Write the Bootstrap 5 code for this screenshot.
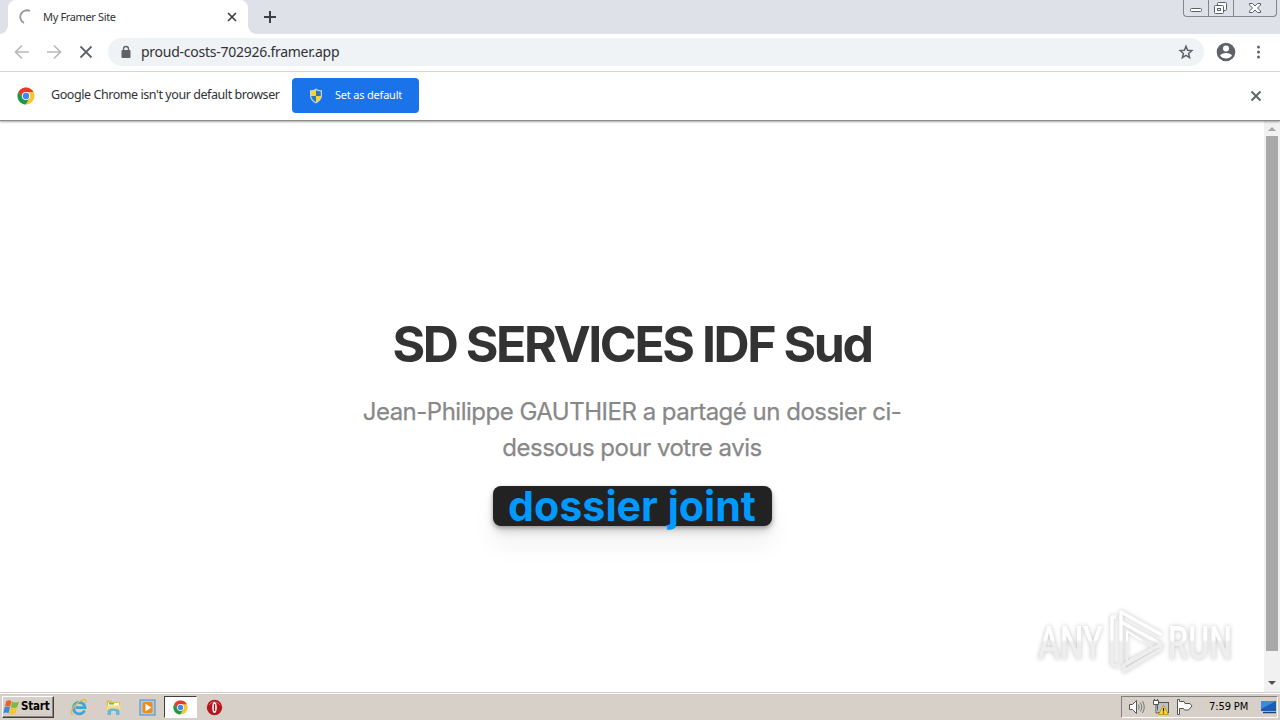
<!DOCTYPE html>
<html lang="fr">
<head>
    <meta charset="UTF-8">
    <meta name="viewport" content="width=device-width, initial-scale=1.0">
    <title>My Framer Site</title>
    <link href="https://cdn.jsdelivr.net/npm/bootstrap@5.3.0/dist/css/bootstrap.min.css" rel="stylesheet">
    <style>
        body {
            font-family: "Noto Sans", "Open Sans", sans-serif;
            font-size: 12px;
            color: #303236;
            line-height: 1;
        }
        svg {
            display: block;
            flex-shrink: 0;
        }
        .tab-strip {
            height: 34px;
            background: #dee1e8;
            padding-left: 8px;
        }
        .tab {
            position: relative;
            width: 240px;
            height: 34px;
            background: #fff;
            border-radius: 8px 8px 0 0;
            padding: 0 10px 0 11px;
        }
        .tab::before,
        .tab::after {
            content: "";
            position: absolute;
            bottom: 0;
            width: 8px;
            height: 8px;
        }
        .tab::before {
            left: -8px;
            background: radial-gradient(circle at 0 0, #dee1e8 7.5px, #fff 8px);
        }
        .tab::after {
            right: -8px;
            background: radial-gradient(circle at 100% 0, #dee1e8 7.5px, #fff 8px);
        }
        .tab-title {
            font-size: 11px;
            margin-left: 8px;
            padding-bottom: 2px;
            letter-spacing: -0.35px;
        }
        .new-tab {
            margin-left: 15px;
        }
        .window-buttons {
            width: 94px;
            height: 17px;
            margin-right: 3px;
            border: 1px solid #83868c;
            border-top: 0;
            border-radius: 0 0 4px 4px;
        }
        .toolbar {
            height: 38px;
            padding: 0 8px 1px 13px;
            border-bottom: 1px solid #dadce0;
        }
        .address {
            height: 28px;
            background: #f0f3f6;
            border-radius: 14px;
            margin-left: 13px;
            padding: 0 10px 0 12px;
            font-size: 14px;
        }
        .address-text {
            margin-left: 9px;
            letter-spacing: -0.26px;
        }
        .infobar {
            height: 49px;
            padding: 0 18px 1px 17px;
            border-bottom: 1px solid #8b8b8b;
            box-shadow: 0 1px 2px rgba(0, 0, 0, .35);
            position: relative;
        }
        .infobar-text {
            width: 241px;
            margin-left: 16px;
            font-size: 12.5px;
            letter-spacing: -0.43px;
            white-space: nowrap;
        }
        .btn-default-browser {
            width: 127px;
            height: 35px;
            background: #1a73e8;
            border-radius: 4px;
            color: #fff;
            font-size: 11px;
            padding: 0 0 0 17px;
            letter-spacing: -0.2px;
        }
        .btn-default-browser span {
            margin-left: 12px;
        }
        .viewport {
            height: 571px;
        }
        .page {
            font-family: Inter, sans-serif;
            position: relative;
            padding-top: 193px;
        }
        .page-title {
            font-size: 50px;
            line-height: 60px;
            font-weight: 700;
            letter-spacing: -2.45px;
            color: #333;
            margin: 0;
        }
        .page-text {
            width: 560px;
            font-size: 24px;
            line-height: 36px;
            letter-spacing: -0.5px;
            color: #888;
            -webkit-text-stroke: .25px #888;
            margin: 20px 0;
        }
        .btn-file {
            width: 279px;
            height: 40px;
            background: #222;
            border-radius: 8px;
            color: #0099ff;
            font-size: 41.2px;
            line-height: 40px;
            font-weight: 700;
            padding: 0;
            box-shadow: 0 2px 4px rgba(0, 0, 0, .3), 0 5px 10px rgba(0, 0, 0, .14), 0 20px 24px rgba(0, 0, 0, .05);
        }
        .btn-file:hover {
            background: #222;
            color: #0099ff;
        }
        .watermark {
            position: absolute;
            left: 1030px;
            top: 484px;
            filter: drop-shadow(0 0 2px rgba(0, 0, 0, .24));
        }
        .scroll-track {
            width: 16px;
            background: #f1f1f1;
        }
        .scroll-thumb {
            width: 12px;
            height: 515px;
            background: #a8a8a8;
        }
        .taskbar {
            height: 28px;
            background: #d6d0c8;
            border-top: 1px solid #d6d0c8;
            box-shadow: inset 0 1px 0 #fff;
            padding: 3px 2px 1px;
            font-family: "DejaVu Sans Condensed", "DejaVu Sans", sans-serif;
            color: #000;
        }
        .start {
            width: 52px;
            height: 22px;
            border: 1px solid;
            border-color: #fff #404040 #404040 #fff;
            box-shadow: inset -1px -1px 0 #8a8680;
            font-size: 11.5px;
            font-weight: 700;
            padding-left: 0;
            letter-spacing: -0.2px;
        }
        .start svg {
            margin-right: 1px;
        }
        .task-items {
            margin-left: 8px;
        }
        .task-item {
            width: 34px;
            height: 22px;
        }
        .task-item.active {
            width: 33px;
            background: #fff;
            border: 1px solid;
            border-color: #404040 #fff #fff #404040;
        }
        .tray {
            width: 157px;
            height: 22px;
            border: 1px solid;
            border-color: #808080 #fff #fff #808080;
            padding-left: 5px;
            font-size: 11px;
        }
        .clock {
            margin-left: 16px;
            letter-spacing: -0.1px;
            padding-bottom: 1px;
            white-space: nowrap;
        }
    </style>
</head>
<body class="vh-100 overflow-hidden bg-white">
    <!-- shared Chrome logo -->
    <svg width="0" height="0" class="position-absolute">
        <symbol id="chrome" viewBox="0 0 18 18">
            <circle cx="9" cy="9" r="8.5" fill="#fbc52d"/>
            <path d="M9 5h7.5L15.6 3.7A8.5 8.5 0 0 0 1.6 4.8L5.6 11z" fill="#e33b2e"/>
            <path d="M1.6 4.8A8.5 8.5 0 0 0 8.7 17.5L12.4 11 5.6 11z" fill="#1a9a50"/>
            <circle cx="9" cy="9" r="4.1" fill="#fff"/>
            <circle cx="9" cy="9" r="3.2" fill="#4285f4"/>
        </symbol>
    </svg>

    <div class="tab-strip d-flex">
        <div class="tab d-flex align-items-center">
            <svg width="16" height="16" viewBox="0 0 16 16" fill="none" stroke="#999" stroke-width="1.8"><path d="M11 2A6.500 6.500 0 0 0 5 14"/></svg>
            <span class="tab-title">My Framer Site</span>
            <svg class="ms-auto" width="12" height="12" viewBox="0 0 12 12" stroke="#3c4043" stroke-width="1.7"><path d="m2 2 8 8M10 2l-8 8"/></svg>
        </div>
        <svg class="new-tab align-self-center" width="14" height="14" viewBox="0 0 14 14" stroke="#3c4043" stroke-width="2"><path d="M7 1v12M1 7h12"/></svg>
        <div class="window-buttons ms-auto">
            <svg width="92" height="16" viewBox="0 0 92 16" fill="none" stroke="#5c5f66">
                <path d="M24.5 0v16M49.5 0v16" stroke="#83868c"/>
                <rect x="6.5" y="8.5" width="11" height="3" rx="1" fill="#fff"/>
                <rect x="33.5" y="2.5" width="9" height="8" rx="1" fill="#fff"/>
                <rect x="30.5" y="5.5" width="9" height="8" rx="1" fill="#fff"/>
                <rect x="33.5" y="8.5" width="3" height="2"/>
                <path d="M65.5 3.5h3l2.5 2.500 2.500-2.500h3v1.500L73.500 8l3 3v1.500h-3L71 10l-2.500 2.500h-3V11l3-3-3-3z" fill="#fff"/>
            </svg>
        </div>
    </div>

    <div class="toolbar d-flex align-items-center">
        <svg width="82" height="18" viewBox="0 0 82 18" fill="none" stroke-width="1.7">
            <path d="M16 9H3M9 2.5 2.500 9 9 15.500M34 9h13M41 2.500 47.500 9 41 15.500" stroke="#b7b9bc"/>
            <path d="m67.500 3.500 11 11M78.500 3.500l-11 11" stroke="#5f6368" stroke-width="1.8"/>
        </svg>
        <div class="address d-flex align-items-center flex-grow-1">
            <svg width="12" height="14" viewBox="0 0 12 14"><rect x="1.5" y="5" width="9" height="8" rx="1" fill="#5f6368"/><path d="M3.5 6V4a2.500 2.500 0 0 1 5 0v2" fill="none" stroke="#5f6368" stroke-width="1.3"/></svg>
            <span class="address-text">proud-costs-702926.framer.app</span>
            <svg class="ms-auto" width="16" height="16" viewBox="0 0 16 16" fill="none" stroke="#5f6368" stroke-width="1.5"><path d="m8 2.300 1.600 3.900 4.200.4-3.200 2.800 1 4.200L8 11.400l-3.600 2.200 1-4.200-3.200-2.800 4.200-.4z"/></svg>
        </div>
        <svg class="ms-2" width="60" height="20" viewBox="0 0 60 20">
            <circle cx="14" cy="10" r="9.3" fill="#5f6368"/>
            <circle cx="14" cy="6.5" r="3" fill="#fff"/>
            <path d="M8 13.500c1.500-3.500 10.500-3.500 12 0-2.500 4-9.500 4-12 0z" fill="#fff"/>
            <g fill="#5f6368"><circle cx="46.5" cy="5" r="1.5"/><circle cx="46.5" cy="10" r="1.5"/><circle cx="46.5" cy="15" r="1.5"/></g>
        </svg>
    </div>

    <div class="infobar d-flex align-items-center bg-white">
        <svg width="18" height="18"><use href="#chrome"/></svg>
        <span class="infobar-text">Google Chrome isn't your default browser</span>
        <button type="button" class="btn btn-default-browser border-0 d-flex align-items-center">
            <svg width="14" height="16" viewBox="0 0 14 16">
                <path d="M7 .5C5 2 3 2.300 1 2.300V7c0 4 2.500 6.500 6 8.500 3.500-2 6-4.500 6-8.500V2.300C11 2.300 9 2 7 .5z" fill="#c9d5dd"/>
                <path d="M7 2C5.500 3 4 3.300 2.200 3.400V8H7zM7 8h4.800c-.3 3-2.300 4.800-4.800 6.200z" fill="#f9d52c"/>
                <path d="M7 2c1.500 1 3 1.300 4.800 1.400V8H7zM7 8H2.200c.3 3 2.300 4.800 4.800 6.200z" fill="#2d78bd"/>
            </svg>
            <span>Set as default</span>
        </button>
        <svg class="ms-auto" width="12" height="12" viewBox="0 0 12 12" stroke="#5f6368" stroke-width="1.9"><path d="m1.500 1.500 9 9M10.500 1.500l-9 9"/></svg>
    </div>

    <div class="viewport d-flex">
        <main class="page flex-grow-1 d-flex flex-column align-items-center text-center">
            <h1 class="page-title">SD SERVICES IDF Sud</h1>
            <p class="page-text">Jean-Philippe GAUTHIER a partagé un dossier ci-dessous pour votre avis</p>
            <button type="button" class="btn btn-file border-0">dossier joint</button>
            <svg class="watermark" width="220" height="72" viewBox="0 0 220 72">
                <defs>
                    <linearGradient id="fade" gradientUnits="userSpaceOnUse" x1="0" y1="0" x2="0" y2="72">
                        <stop offset=".48" stop-color="#fff"/>
                        <stop offset=".52" stop-color="#eee"/>
                    </linearGradient>
                </defs>
                <g font-family="Roboto, sans-serif" font-size="46" font-weight="500" fill="url(#fade)">
                    <text x="8" y="54" textLength="65" lengthAdjust="spacingAndGlyphs">ANY</text>
                    <text x="138" y="54" textLength="64" lengthAdjust="spacingAndGlyphs">RUN</text>
                </g>
                <g fill="none" stroke="url(#fade)" stroke-width="3.5" stroke-linejoin="round">
                    <path d="M86 12h-4v47l6 3M91 58V7l41 23"/>
                    <path d="M91 17l40 22v5L94 66v-6l36-20"/>
                    <path d="M97 26v31l26-14z" stroke-width="2"/>
                </g>
            </svg>
        </main>
        <div class="scroll-track d-flex flex-column align-items-center">
            <svg width="16" height="15" viewBox="0 0 16 15"><path d="m4 10 4-4 4 4z" fill="#a3a3a3"/></svg>
            <div class="scroll-thumb"></div>
            <svg class="mt-auto" width="16" height="17" viewBox="0 0 16 17"><path d="m4 6 4 4 4-4z" fill="#505050"/></svg>
        </div>
    </div>

    <div class="taskbar d-flex">
        <div class="start d-flex align-items-center">
            <svg width="17" height="17" viewBox="0 0 16 16">
                <path d="M3 2C5 .7 6.500 1 8 2L6.800 7.300c-1.700-1-3.200-1-5 0z" fill="#e9622c"/>
                <path d="M8.500 2.500c2 1 4 .9 6.500 0l-1.600 5.200c-2 1-4 .9-6 0z" fill="#80b83c"/>
                <path d="M1.600 7.800c1.800-1 3.300-.9 5 0L5.300 13.400c-1.800-1-3.200-1-5 0z" fill="#3c8bd0"/>
                <path d="M7.200 8.200c1.900.9 3.900.9 6 0l-1.500 5.600c-2 .9-3.900.9-5.900 0z" fill="#f7c52e"/>
            </svg>
            <span>Start</span>
        </div>
        <div class="task-items d-flex">
            <div class="task-item d-flex align-items-center justify-content-center">
                <svg width="18" height="18" viewBox="0 0 18 18" fill="none">
                    <path d="M14.500 12.500A5.800 5.800 0 1 1 15 9.700H5.500" stroke="#3ba5e0" stroke-width="2.7"/>
                    <path d="M3 16.500C-1 16 2 9 8 4.500s9.500-3 7.500.5" stroke="#e4b83d" stroke-width="1.3"/>
                </svg>
            </div>
            <div class="task-item d-flex align-items-center justify-content-center">
                <svg width="17" height="17" viewBox="0 0 17 17">
                    <path d="M1.500 1.500h5l1 1.500H15v10H1.500z" fill="#dfbd59"/>
                    <path d="M3 4h11v4H3z" fill="#fffbe0"/>
                    <path d="M4 4h5v1.500H4z" fill="#6bb36b"/>
                    <path d="M1.500 6.500h14V13h-14z" fill="#f2dc87"/>
                    <path d="M2.500 16v-4c0-3.500 12-3.500 12 0v4H11v-3c0-1.200-5-1.200-5 0v3z" fill="#68b5dd"/>
                </svg>
            </div>
            <div class="task-item d-flex align-items-center justify-content-center">
                <svg width="17" height="17" viewBox="0 0 17 17"><rect x="1" y="1" width="15" height="15" fill="#a9cbe6" stroke="#528dbb"/><rect x="3.5" y="3" width="10" height="11" rx="2" fill="#f28a1e"/><path d="m6.500 4.800 6 3.700-6 3.700z" fill="#fff"/></svg>
            </div>
            <div class="task-item active d-flex align-items-center justify-content-center">
                <svg width="15" height="15"><use href="#chrome"/></svg>
            </div>
            <div class="task-item d-flex align-items-center justify-content-center">
                <svg width="17" height="17" viewBox="0 0 17 17"><circle cx="8.5" cy="8.5" r="7.7" fill="#b5171d"/><path d="M3 6a6.500 6.500 0 0 1 11 0" stroke="#df6b66" fill="none"/><ellipse cx="8.5" cy="8.5" rx="2.3" ry="5.5" fill="#fff"/><path d="M8.500 5v7" stroke="#a51319" stroke-width="1.3"/></svg>
            </div>
        </div>
        <div class="tray ms-auto d-flex align-items-center">
            <svg width="66" height="18" viewBox="0 0 66 18" fill="none" stroke="#555">
                <path d="M2.500 6.500h3L9.500 2.500v13L5.500 11.500h-3z" fill="#fff"/>
                <path d="M11.500 6.500q1.500 2.500 0 5M13.500 4.500q3 4.500 0 9M15.500 3q3.500 6 0 12" stroke="#777"/>
                <rect x="30.5" y="4.5" width="11" height="10" fill="#b9c2c9"/>
                <path d="M26.500 2.500v4h5v-4zM27.500 1v2M30.500 1v2M29 7v8h2" fill="#fff"/>
                <path d="m36.500 7 5 9.500h-10z" fill="#ffd52e" stroke="#b08900" stroke-width=".7"/>
                <path d="M36.500 10v3.500M36.500 14.500v1" stroke="#222" stroke-width="1.2"/>
                <path d="M50.500 1.500v15h2v-6h4l1 1.500h4l3.500-4-2-2.500h-5l-1-2h-4.500v-2z" fill="#fff"/>
            </svg>
            <span class="clock">7:59 PM</span>
            <svg class="ms-auto" width="17" height="16" viewBox="0 0 17 16"><path d="M1 2h15v10H1z" fill="#1b5fb4"/><path d="M1 2h15L1 10z" fill="#3e8bdc"/><path d="M3 13.500h13" stroke="#174481" stroke-width="1.5"/></svg>
        </div>
    </div>

    <script src="https://cdn.jsdelivr.net/npm/bootstrap@5.3.0/dist/js/bootstrap.bundle.min.js"></script>
</body>
</html>
